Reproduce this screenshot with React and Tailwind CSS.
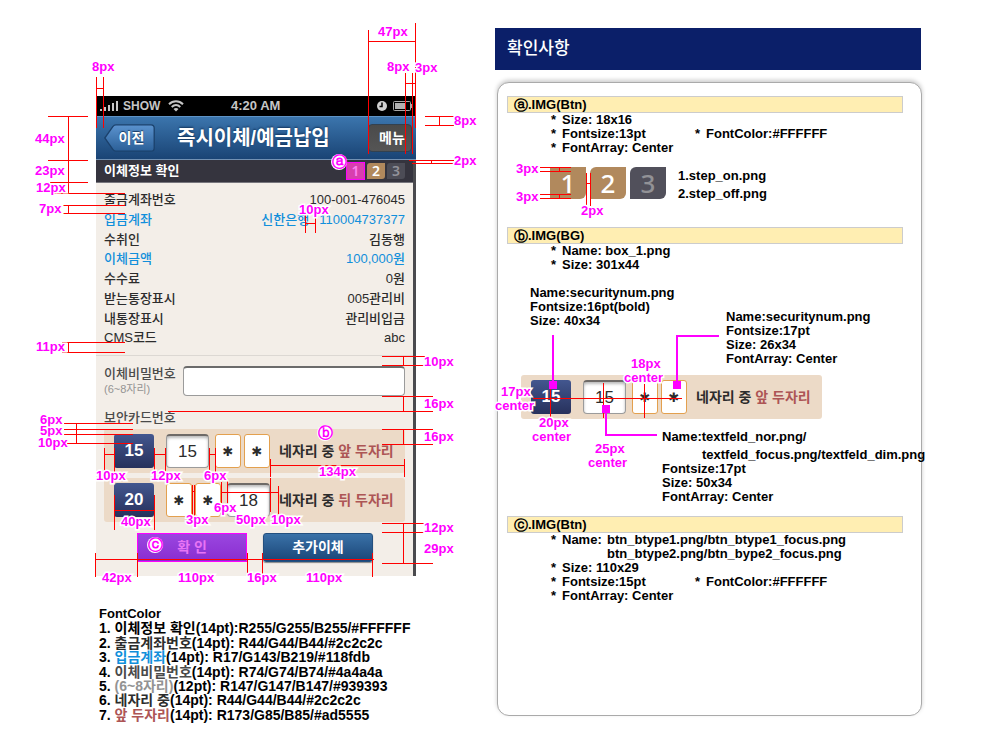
import React from "react";

const PHONE_LINES = [
  // top left margin
  [96, 77, 96, 127], [103, 77, 103, 127], [96, 88, 103, 88],
  // bar heights
  [48, 116, 87, 116], [48, 160, 87, 160], [50, 182, 87, 182], [54, 193, 124, 193], [68, 116, 68, 193],
  // row gap
  [62, 205, 124, 205], [62, 213, 124, 213], [68, 205, 68, 213],
  [62, 342, 124, 342], [62, 352, 124, 352], [68, 342, 68, 352],
  // menu button
  [368, 30, 368, 153], [415, 23, 415, 127], [368, 41, 415, 41],
  [405, 73, 405, 153], [412, 73, 412, 153], [405, 83, 415, 83],
  [425, 116, 453, 116], [425, 125, 453, 125], [439, 116, 439, 125],
  [409, 160, 453, 160], [412, 163, 453, 163], [431, 160, 431, 163],
  // account gap
  [305, 215, 305, 232], [315, 215, 315, 232], [305, 223, 315, 223],
  // right column of heights
  [382, 356, 424, 356], [382, 365, 424, 365], [403, 356, 403, 365],
  [382, 396, 432, 396], [168, 411, 432, 411], [403, 396, 403, 411],
  [382, 429, 432, 429], [382, 444, 432, 444], [403, 429, 403, 444],
  [382, 523, 423, 523], [382, 532, 423, 532], [382, 563, 432, 563], [403, 523, 403, 563],
  // security card, left heights
  [64, 423, 132, 423], [64, 429, 132, 429], [64, 434, 132, 434], [67, 443, 132, 443], [76, 423, 76, 443],
  // first security row
  [104, 454, 114, 454], [154, 454, 165, 454], [209, 454, 215, 454],
  [104, 448, 104, 476], [114, 448, 114, 476], [154, 448, 154, 476], [165, 448, 165, 476],
  [209, 448, 209, 476], [215, 448, 215, 476],
  [270, 459, 270, 476], [404, 459, 404, 476], [270, 465, 404, 465],
  // second security row
  [114, 495, 114, 529], [154, 495, 154, 529], [114, 510, 154, 510],
  [192, 485, 192, 515], [194, 485, 194, 515], [192, 491, 194, 491],
  [221, 482, 221, 502], [227, 481, 227, 502], [221, 492, 278, 492],
  [270, 478, 270, 511], [278, 486, 278, 513],
  // buttons
  [95, 559, 373, 559], [95, 553, 95, 576], [137, 553, 137, 576], [247, 553, 247, 576],
  [262, 553, 262, 576], [372, 553, 372, 576],
];

const PHONE_LABELS = [
  ["8px", 92, 67], ["47px", 378, 32], ["8px", 387, 67], ["3px", 415, 68],
  ["44px", 35, 139], ["23px", 35, 171], ["12px", 36, 188], ["7px", 39, 209],
  ["8px", 454, 121], ["2px", 454, 161], ["10px", 299, 210], ["11px", 36, 347],
  ["10px", 424, 362], ["16px", 424, 404], ["16px", 424, 437],
  ["6px", 40, 420], ["5px", 40, 431], ["10px", 38, 443],
  ["10px", 96, 476], ["12px", 151, 476], ["6px", 204, 476], ["134px", 319, 472],
  ["40px", 121, 522], ["3px", 186, 520], ["6px", 214, 508], ["50px", 236, 520], ["10px", 271, 520],
  ["42px", 102, 578], ["110px", 178, 578], ["16px", 247, 578], ["110px", 306, 578],
  ["12px", 424, 528], ["29px", 424, 549],
];

const NOTE_LINES = [
  [45, 167, 75, 167], [45, 171, 75, 171], [64, 167, 64, 171],
  [45, 194, 75, 194], [45, 198, 75, 198], [64, 194, 64, 198],
  [91, 173, 91, 205], [95, 173, 95, 205], [91, 183, 95, 183],
  [38, 398, 186, 398], [55, 384, 55, 417], [108, 383, 108, 417], [149, 384, 149, 417],
];

const NOTE_LABELS = [
  ["3px", 21, 169], ["3px", 21, 197], ["2px", 86, 211],
  ["17px", 6, 392], ["center", 0, 406],
  ["18px", 136, 364], ["center", 129, 378],
  ["20px", 44, 423], ["center", 37, 437],
  ["25px", 100, 449], ["center", 93, 463],
];

function Redlines({ lines, labels, children }) {
  return (
    <div className="pointer-events-none absolute top-0 left-0">
      <svg width="1" height="1" className="absolute top-0 left-0 overflow-visible" shapeRendering="crispEdges" aria-hidden="true">
        {lines.map(([x1, y1, x2, y2], i) => (
          <rect key={i} x={x1} y={y1} width={x2 - x1 + 1} height={y2 - y1 + 1} fill="#ff0000" />
        ))}
        {children}
      </svg>
      {labels.map(([text, x, y], i) => (
        <span
          key={i}
          className="absolute text-[13px] leading-[11px] font-bold whitespace-nowrap text-[#ff00ff] [paint-order:stroke_fill] [-webkit-text-stroke:3px_white]"
          style={{ left: x, top: y - 6 }}
        >
          {text}
        </span>
      ))}
    </div>
  );
}

function Marker({ children, className }) {
  return (
    <span className={"pointer-events-none absolute flex size-4 items-center justify-center rounded-full bg-white font-['DejaVu_Sans'] text-[15px] leading-4 font-bold text-[#ff00ff] " + className}>
      {children}
    </span>
  );
}

function Star({ label }) {
  return (
    <input
      type="text"
      aria-label={label}
      defaultValue="✱"
      className="h-[34px] w-[26px] rounded-[3px] border border-[#e3a04e] bg-white text-center font-['DejaVu_Sans'] text-[13px] font-normal text-[#2c2c2c]"
    />
  );
}

function Digits({ label, value }) {
  return (
    <input
      type="text"
      aria-label={label}
      defaultValue={value}
      className="h-[34px] w-[43px] rounded-[4px] border border-t-2 border-[#9b9b9b] border-t-[#6e6a67] bg-white text-center text-[17px] font-normal text-[#2c2c2c] shadow-[inset_0_2px_3px_#bbbbbb]"
    />
  );
}

function SecurityRow({ number, value, digitsFirst, part }) {
  return (
    <div className="flex h-11 w-[301px] items-center rounded-[3px] bg-[#ecdac7] pl-[10px] text-[#2c2c2c]">
      <span className="flex h-[34px] w-10 items-center justify-center rounded-[3px] bg-linear-to-b from-[#43578f] to-[#27315c] text-[17px] font-bold text-white">
        {number}
      </span>
      <div className="ml-3 flex items-center gap-[6px]">
        {digitsFirst && <Digits label="카드번호" value={value} />}
        <div className="flex gap-[3px]">
          <Star label="숨은 자리 1" />
          <Star label="숨은 자리 2" />
        </div>
        {!digitsFirst && <Digits label="카드번호" value={value} />}
      </div>
      <span className="ml-[9px] text-[14px] font-bold whitespace-nowrap">
        네자리 중 <span className="text-[#ad5555]">{part} 두자리</span>
      </span>
    </div>
  );
}

const DETAILS = [
  ["출금계좌번호", "100-001-476045", false],
  ["입금계좌", "110004737377", true],
  ["수취인", "김동행", false],
  ["이체금액", "100,000원", true],
  ["수수료", "0원", false],
  ["받는통장표시", "005관리비", false],
  ["내통장표시", "관리비입금", false],
  ["CMS코드", "abc", false],
];

function StatusBar() {
  return (
    <div className="flex h-5 items-center bg-black pl-1 text-[13px] font-bold text-[#c6c6c6]">
      <svg width="19" height="10" className="mr-1" fill="#c6c6c6" aria-hidden="true">
        <rect x="0" y="8" width="2" height="2" />
        <rect x="4" y="6" width="2" height="4" />
        <rect x="8" y="4" width="2" height="6" />
        <rect x="12" y="2" width="2" height="8" />
        <rect x="16" y="0" width="2" height="10" />
      </svg>
      <span className="w-[45px] text-[12px]">SHOW</span>
      <svg width="16" height="12" viewBox="0 0 16 12" fill="none" stroke="#c6c6c6" strokeWidth="2" aria-hidden="true">
        <path d="M1 4.2C5 .3 11 .3 15 4.2" />
        <path d="M3.7 7C6.3 4.6 9.700 4.600 12.300 7" />
        <path d="M8 11.500L5.500 9C7 7.700 9 7.700 10.500 9Z" fill="#c6c6c6" stroke="none" />
      </svg>
      <span className="flex-1 pl-[47px]">4:20 AM</span>
      <svg width="10" height="10" viewBox="0 0 10 10" className="mr-[6px]" aria-hidden="true">
        <circle cx="5" cy="5" r="5" fill="#d0d0d0" />
        <path d="M5 1.500V5.500H2.500" fill="none" stroke="#000" strokeWidth="1.500" />
      </svg>
      <svg width="20" height="10" viewBox="0 0 20 10" className="mr-[3px]" aria-hidden="true">
        <rect x=".5" y=".5" width="17" height="9" rx="1" fill="none" stroke="#a8a8a8" />
        <rect x="2" y="2" width="11" height="6" fill="#b0b0b0" />
        <rect x="18" y="3" width="2" height="4" fill="#a8a8a8" />
      </svg>
    </div>
  );
}

function Phone() {
  return (
    <div className="w-80 bg-[#4a4a4e]">
      <StatusBar />
      <header className="flex h-11 items-center border-t border-b border-t-[#5f94c6] border-b-[#7291b3] bg-linear-to-b from-[#3b75ad] to-[#1a4475] pl-2 text-white">
        <button type="button" className="relative h-7 w-[51px] pl-1 text-[14px] leading-7 font-bold [text-shadow:0_-1px_1px_#1a3a60]">
          <svg width="51" height="28" viewBox="0 0 51 28" className="absolute top-0 left-0" aria-hidden="true">
            <defs>
              <linearGradient id="back" x1="0" y1="0" x2="0" y2="1">
                <stop offset="0" stopColor="#5b93cf" />
                <stop offset="1" stopColor="#2b5f97" />
              </linearGradient>
            </defs>
            <path d="M.8 14L9 2.500Q10 .800 12 .800H47Q50.200 .800 50.200 4V24Q50.200 27.200 47 27.200H12Q10 27.200 9 25.500Z" fill="url(#back)" stroke="#1b416c" strokeWidth="1.300" />
          </svg>
          <span className="relative">이전</span>
        </button>
        <h1 className="ml-[22px] flex-1 text-[20px] font-bold whitespace-nowrap [text-shadow:0_-1px_2px_#12345c]">즉시이체/예금납입</h1>
        <button type="button" className="mr-1 h-7 w-[44px] rounded-[4px] border border-[#33414f] bg-linear-to-b from-[#4a4a4a] to-[#555555] pl-1 text-[14px] leading-6 font-bold">
          메뉴
        </button>
      </header>
      <div className="mr-[3px] flex h-[23px] items-center justify-between border-b border-[#77767d] bg-[#35343e] pr-2 pl-2">
        <h2 className="text-[13px] font-bold text-white">이체정보 확인</h2>
        <ol className="flex items-center gap-[2px] text-center font-['Noto_Sans'] text-[14px] font-semibold">
          <li className="h-[18px] w-[19px] border border-[#ff00ff] bg-[#d83fae] leading-4 text-[#ff80f0]">1</li>
          <li className="h-4 w-[18px] rounded-tl-[3px] rounded-br-[3px] bg-[#b1895d] leading-4 text-white">2</li>
          <li className="h-4 w-[18px] rounded-tl-[3px] rounded-br-[3px] bg-[#4c4c56] leading-4 text-[#92929a]">3</li>
        </ol>
      </div>
      <div className="mr-[3px] bg-[#f3eee8] pt-[7px] pb-[14px]">
        <dl className="grid h-[158px] grid-rows-8 px-2 text-[13px] leading-5 font-medium">
          {DETAILS.map(([name, value, blue]) => (
            <div key={name} className={blue ? "flex justify-between text-[#118fdb]" : "flex justify-between text-[#2c2c2c]"}>
              <dt>{name}</dt>
              <dd className="flex gap-[10px]">
                {name === "입금계좌" && <span>신한은행</span>}
                <span>{value}</span>
              </dd>
            </div>
          ))}
        </dl>
        <hr className="mt-[7px] border-t border-[#dcd8d3]" />
        <div className="mt-[10px] flex h-[30px] items-start pr-2 pl-2">
          <label htmlFor="transfer-pin" className="w-[79px] text-[13px] leading-4 font-medium whitespace-nowrap text-[#4a4a4a]">
            이체비밀번호
            <span className="block text-[11px] leading-[14px] font-normal text-[#939393]">(6~8자리)</span>
          </label>
          <input
            id="transfer-pin"
            type="password"
            className="h-[30px] min-w-0 flex-1 rounded-[4px] border border-t-2 border-[#9b9b9b] border-t-[#6b6b6b] bg-white px-2"
          />
        </div>
        <div className="mt-[11px] px-2">
          <h3 className="text-[13px] leading-[22px] font-medium text-[#4a4a4a]">보안카드번호</h3>
          <div className="flex flex-col gap-[5px]">
            <SecurityRow number="15" value="15" digitsFirst part="앞" />
            <SecurityRow number="20" value="18" part="뒤" />
          </div>
        </div>
        <div className="mt-[11px] flex gap-4 pl-[41px] text-[14px] font-bold">
          <button type="button" className="h-[29px] w-[110px] border border-[#ff00ff] bg-linear-to-b from-[#9a46e0] to-[#8a2dd0] text-center text-[#e774f5]">
            확 인
          </button>
          <button type="button" className="h-[29px] w-[110px] rounded-[3px] border border-[#24507f] bg-linear-to-b from-[#3a72a8] to-[#1b4678] text-center text-white shadow-[0_1px_1px_#888888]">
            추가이체
          </button>
        </div>
      </div>
    </div>
  );
}

function Legend() {
  return (
    <div className="mt-[31px] pl-[3px] text-[14px] leading-[14px] font-bold whitespace-nowrap text-black">
      <h3 className="text-[13px]">FontColor</h3>
      <ol>
        <li>1. 이체정보 확인(14pt):R255/G255/B255/#FFFFFF</li>
        <li className="mt-px">2. <span className="text-[#2c2c2c]">출금계좌번호</span>(14pt): R44/G44/B44/#2c2c2c</li>
        <li>3. <span className="text-[#118fdb]">입금계좌</span>(14pt): R17/G143/B219/#118fdb</li>
        <li className="mt-px">4. <span className="text-[#4a4a4a]">이체비밀번호</span>(14pt): R74/G74/B74/#4a4a4a</li>
        <li>5. <span className="text-[#939393]">(6~8자리)</span>(12pt): R147/G147/B147/#939393</li>
        <li>6. <span className="text-[#2c2c2c]">네자리 중</span>(14pt): R44/G44/B44/#2c2c2c</li>
        <li className="mt-px">7. <span className="text-[#ad5555]">앞 두자리</span>(14pt): R173/G85/B85/#ad5555</li>
      </ol>
    </div>
  );
}

function SectionTitle({ mark, children }) {
  return (
    <h3 className="flex h-[17px] items-center border border-[#cccccc] bg-[#ffeeb2] pl-[6px] leading-4">
      <span className="font-['DejaVu_Sans'] text-[14px]">{mark}</span>
      {children}
    </h3>
  );
}

function Item({ children }) {
  return (
    <li className="flex">
      <span className="w-[11px]">*</span>
      {children}
    </li>
  );
}

function Notes() {
  return (
    <div className="min-h-[634px] rounded-xl border border-[#aaaaaa] bg-white pt-[13px] pr-[18px] pb-8 pl-[9px] text-[13px] leading-[14px] font-bold whitespace-nowrap text-black shadow-[0_-2px_4px_#cccccc]">
      <section>
        <SectionTitle mark="ⓐ">.IMG(Btn)</SectionTitle>
        <ul className="pl-11">
          <Item>Size: 18x16</Item>
          <li className="flex">
            <span className="w-[11px]">*</span>
            <span className="w-[133px]">Fontsize:13pt</span>
            <span className="w-[11px]">*</span>
            FontColor:#FFFFFF
          </li>
          <Item>FontArray: Center</Item>
        </ul>
        <div className="mt-3 flex items-start pl-[43px]">
          <ol className="flex gap-1 text-center font-['Noto_Sans'] text-[26px] leading-8 font-medium">
            <li className="h-8 w-9 rounded-br-md bg-[#b1895d] text-white">1</li>
            <li className="h-8 w-9 rounded-tl-md rounded-br-md bg-[#b1895d] text-white">2</li>
            <li className="h-8 w-9 rounded-tl-md rounded-br-md bg-[#51505b] text-[#929296]">3</li>
          </ol>
          <div className="pl-3 leading-[18px]">
            <p>1.step_on.png</p>
            <p>2.step_off.png</p>
          </div>
        </div>
      </section>

      <section className="mt-6">
        <SectionTitle mark="ⓑ">.IMG(BG)</SectionTitle>
        <ul className="pl-11">
          <Item>Name: box_1.png</Item>
          <Item>Size: 301x44</Item>
        </ul>
        <div className="mt-[14px] flex items-start pl-[23px]">
          <div className="w-[196px]">
            <p>Name:securitynum.png</p>
            <p>Fontsize:16pt(bold)</p>
            <p>Size: 40x34</p>
          </div>
          <div className="mt-6">
            <p>Name:securitynum.png</p>
            <p>Fontsize:17pt</p>
            <p>Size: 26x34</p>
            <p>FontArray: Center</p>
          </div>
        </div>
        <div className="mt-[9px] pl-[14px]">
          <SecurityRow number="15" value="15" digitsFirst part="앞" />
        </div>
        <div className="mt-[11px] pl-[155px]">
          <p>Name:textfeld_nor.png/</p>
          <p className="mt-1 pl-10">textfeld_focus.png/textfeld_dim.png</p>
          <p>Fontsize:17pt</p>
          <p>Size: 50x34</p>
          <p>FontArray: Center</p>
        </div>
      </section>

      <section className="mt-3">
        <SectionTitle mark="ⓒ">.IMG(Btn)</SectionTitle>
        <ul className="pl-11">
          <Item>
            <span className="w-[45px]">Name:</span>
            <span>
              btn_btype1.png/btn_btype1_focus.png
              <br />
              btn_btype2.png/btn_bype2_focus.png
            </span>
          </Item>
          <Item>Size: 110x29</Item>
          <li className="flex">
            <span className="w-[11px]">*</span>
            <span className="w-[133px]">Fontsize:15pt</span>
            <span className="w-[11px]">*</span>
            FontColor:#FFFFFF
          </li>
          <Item>FontArray: Center</Item>
        </ul>
      </section>
    </div>
  );
}

export default function App() {
  return (
    <main className="flex min-h-screen items-start bg-white pr-[78px] pb-5 font-['Liberation_Sans','Noto_Sans_CJK_KR',sans-serif]">
      <section className="relative w-[495px] shrink-0 pt-24 pl-24">
        <Phone />
        <Legend />
        <Redlines lines={PHONE_LINES} labels={PHONE_LABELS} />
        <Marker className="top-[154px] left-[331px]">ⓐ</Marker>
        <Marker className="top-[425px] left-[317px]">ⓑ</Marker>
        <Marker className="top-[537px] left-[147px]">ⓒ</Marker>
      </section>
      <section className="relative min-w-0 flex-1 pt-7">
        <h2 className="mr-px flex h-[42px] items-center bg-[#0b1f69] pl-3 text-[17px] font-medium text-white">확인사항</h2>
        <div className="mt-3 pl-[2px]">
          <Notes />
        </div>
        <Redlines lines={NOTE_LINES} labels={NOTE_LABELS}>
          <g fill="#ff00ff">
            <rect x="57" y="335" width="2" height="50" />
            <rect x="54" y="381" width="8" height="8" />
            <rect x="181" y="335" width="2" height="50" />
            <rect x="181" y="335" width="43" height="2" />
            <rect x="178" y="381" width="8" height="8" />
            <rect x="110" y="409" width="2" height="27" />
            <rect x="110" y="434" width="52" height="2" />
            <rect x="107" y="405" width="8" height="8" />
          </g>
        </Redlines>
      </section>
    </main>
  );
}
